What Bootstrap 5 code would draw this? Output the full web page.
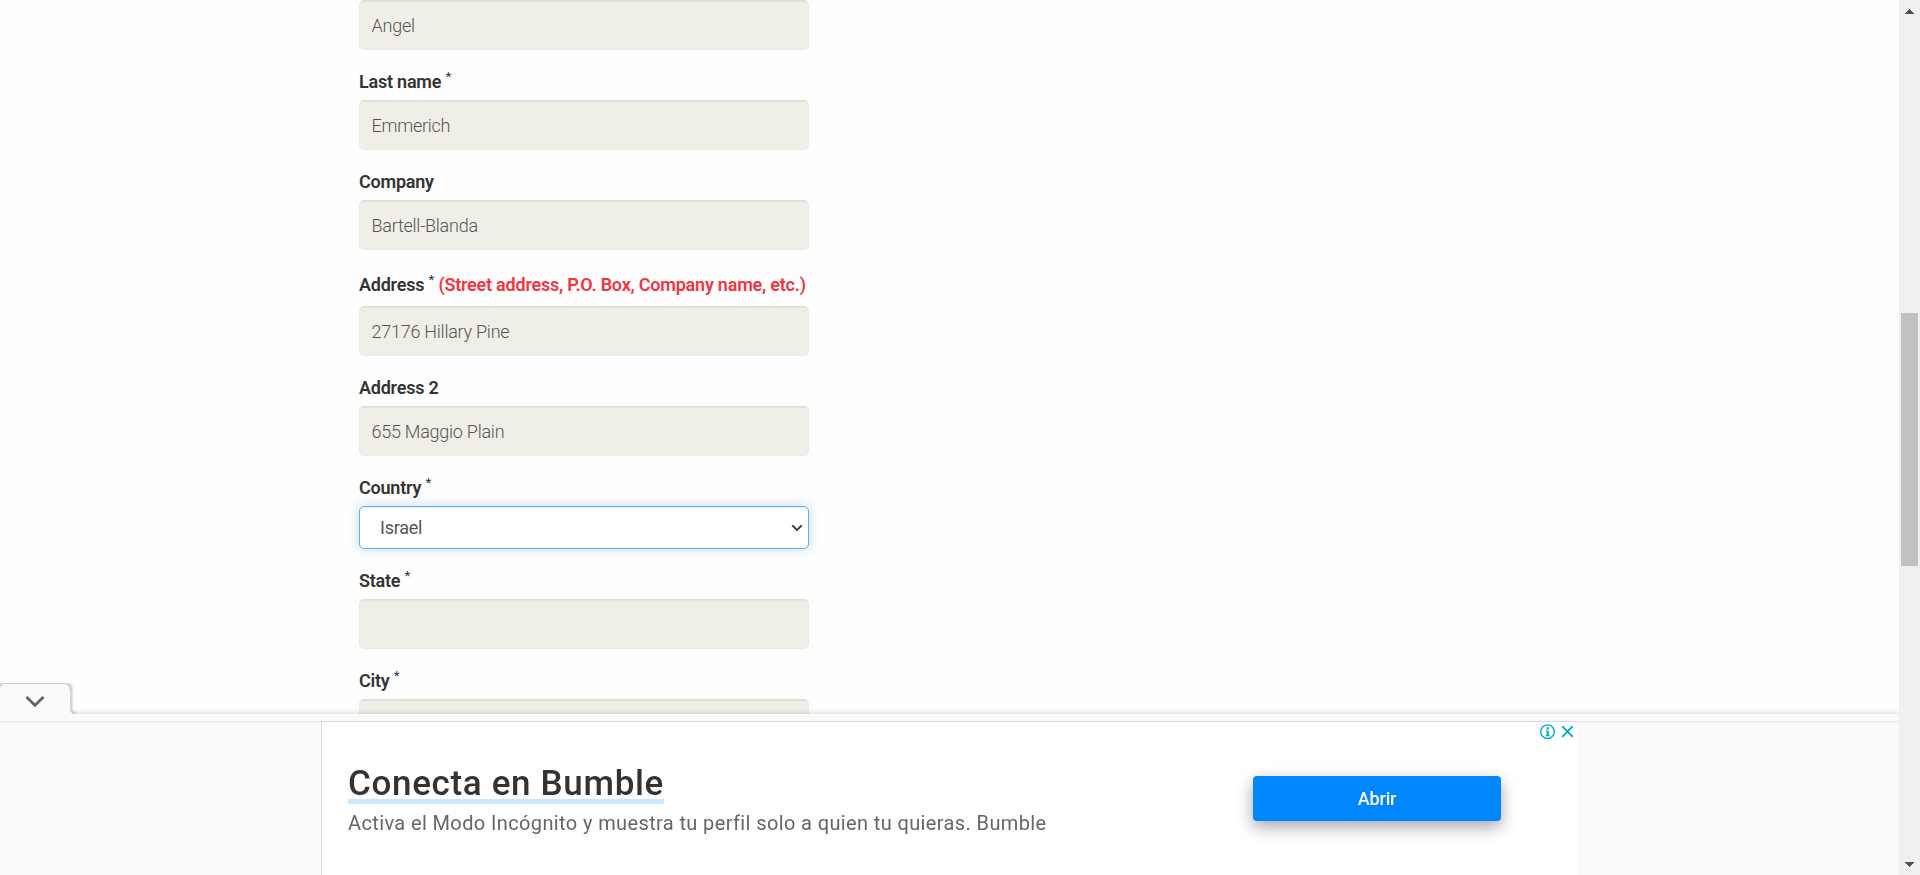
<!DOCTYPE html>
<html lang="en">
<head>
<meta charset="utf-8">
<meta name="viewport" content="width=device-width, initial-scale=1">
<title>Billing details</title>
<link href="https://cdn.jsdelivr.net/npm/bootstrap@5.3.0/dist/css/bootstrap.min.css" rel="stylesheet">
<style>
  body { font-family: Roboto, "Liberation Sans", sans-serif; background: #fefefe; color: #333; }
  .page-area { min-width: 0; }
  .billing-form { width: 450px; margin-left: 359px; }
  .field-label { display: block; height: 50px; padding-top: 19px; font-size: 18px; line-height: 26px; font-weight: 600; letter-spacing: -.22px; white-space: nowrap; color: #333; }
  .field-label.tall { height: 56px; padding-top: 22px; }
  .field-label sup { font-size: 13.5px; font-weight: 400; line-height: 0; top: -.5em; }
  .field-label .hint { color: #f5333f; }
  .billing-form .form-control { height: 50px; padding: 0 12px 0 11.5px; border: 1px solid #ebebe3; border-top-color: #dfdfd5; border-radius: 5px; background: #f0efe7; box-shadow: inset 0 1px 1px rgba(0,0,0,.05); font-size: 18px; font-weight: 300; letter-spacing: -.25px; color: #555; }
  .billing-form .form-select { height: 43px; padding: 0 12px 0 20px; border: 1px solid #66afe9; border-radius: 5px; background-color: #fff; background-size: 12px 8px; background-position: right 5px center; background-image: url("data:image/svg+xml,%3Csvg xmlns='http://www.w3.org/2000/svg' viewBox='0 0 12 8'%3E%3Cpath d='M1.2 1.3 6 6 10.800 1.300' fill='none' stroke='%23484848' stroke-width='2'/%3E%3C/svg%3E"); box-shadow: inset 0 1px 1px rgba(0,0,0,.075), 0 0 12px rgba(102,175,233,.45); font-size: 18px; font-weight: 400; letter-spacing: -.25px; color: #555; }
  .scroll-rail { width: 21px; background: #f0f0f0; padding: 9px 0 8px; }
  .scroll-thumb { width: 17px; height: 253px; background: #c1c1c1; margin-top: 299px; }
  .ad-dock { right: 21px; height: 161px; background: #fafafa; box-shadow: 0 -1px 5px rgba(0,0,0,.15); clip-path: inset(-40px 0 0 0); }
  .ad-handle { left: 0; top: -31px; }
  .ad-strip { height: 8px; background: #fafafa; border-bottom: 1px solid #e8e8e8; box-shadow: 0 1px 2px rgba(0,0,0,.05); }
  .ad-unit { width: 1256px; height: 153px; margin-left: 321px; background: #fff; border-left: 1px solid #e0e0e0; box-shadow: 0 -1px 0 #d8d8d8; padding-left: 26px; }
  .ad-copy { padding-top: 40px; width: 905px; white-space: nowrap; }
  .ad-title { display: inline-block; font-size: 35px; line-height: 43px; height: 42px; font-weight: 500; letter-spacing: .66px; color: #333; border-bottom: 5px solid #cce7ff; margin: 0; }
  .ad-text { font-size: 20px; line-height: 26px; letter-spacing: .38px; color: #666; margin: 6px 0 0; }
  .ad-cta { width: 248px; height: 45px; margin-top: 54px; padding: 0; border: 0; border-radius: 4px; background: #0087ff; font-size: 18px; font-weight: 500; letter-spacing: -.2px; color: #fff; box-shadow: 0 6px 16px rgba(20,20,50,.38); }
  .ad-badges { padding: 2px 1px 0 0; height: 18px; }
</style>
</head>
<body class="vh-100 overflow-hidden">
<div class="d-flex vh-100">
  <main class="page-area flex-grow-1 overflow-hidden">
    <form class="billing-form">
      <input class="form-control" type="text" value="Angel" aria-label="First name">
      <label class="field-label" for="last">Last name <sup>*</sup></label>
      <input class="form-control" type="text" id="last" value="Emmerich">
      <label class="field-label" for="company">Company</label>
      <input class="form-control" type="text" id="company" value="Bartell-Blanda">
      <label class="field-label tall" for="addr">Address <sup>*</sup> <span class="hint">(Street address, P.O. Box, Company name, etc.)</span></label>
      <input class="form-control" type="text" id="addr" value="27176 Hillary Pine">
      <label class="field-label" for="addr2">Address 2</label>
      <input class="form-control" type="text" id="addr2" value="655 Maggio Plain">
      <label class="field-label" for="country">Country <sup>*</sup></label>
      <select class="form-select" id="country"><option>Israel</option></select>
      <label class="field-label" for="state">State <sup>*</sup></label>
      <input class="form-control" type="text" id="state">
      <label class="field-label" for="city">City <sup>*</sup></label>
      <input class="form-control" type="text" id="city">
    </form>
  </main>
  <aside class="scroll-rail d-flex flex-column align-items-center flex-shrink-0">
    <svg class="flex-shrink-0" width="9" height="5" shape-rendering="crispEdges"><path d="M4.500 0 9 5H0z" fill="#505050"/></svg>
    <div class="scroll-thumb flex-shrink-0"></div>
    <svg class="flex-shrink-0 mt-auto" width="9" height="5" shape-rendering="crispEdges"><path d="M0 0h9L4.500 5z" fill="#505050"/></svg>
  </aside>
</div>

<aside class="ad-dock position-fixed bottom-0 start-0">
  <svg class="ad-handle position-absolute" width="80" height="39" viewBox="0 0 80 39">
    <defs><filter id="soft" x="-20%" y="-20%" width="140%" height="140%"><feGaussianBlur stdDeviation="1.300"/></filter></defs>
    <path d="M0 4Q1 0 5 0H65Q71 0 71 7V26Q71 31 76 31" fill="none" stroke="#000" stroke-opacity=".28" stroke-width="2" filter="url(#soft)"/>
    <path d="M0 5Q1 .5 5 .5H63Q70 .5 70 7V26Q70 31 76 31H80V38H0z" fill="#fafafa"/>
    <path d="M0 4Q1 .5 5 .5H63Q70 .5 70 7" fill="none" stroke="#ccc"/>
    <path d="M26.500 14 35 22.300 43.500 14" fill="none" stroke="#5f6368" stroke-width="2.700"/>
  </svg>
  <div class="ad-strip"></div>
  <div class="ad-unit d-flex position-relative">
    <div class="ad-copy flex-shrink-0">
      <h2 class="ad-title">Conecta en Bumble</h2>
      <p class="ad-text">Activa el Modo Incógnito y muestra tu perfil solo a quien tu quieras. Bumble</p>
    </div>
    <button class="btn ad-cta flex-shrink-0" type="button">Abrir</button>
    <div class="ad-badges d-flex ms-auto position-absolute top-0 end-0">
      <svg width="36" height="16" viewBox="0 0 36 16"><circle cx="7.500" cy="7.700" r="6.800" fill="none" stroke="#00aecd" stroke-width="1.400"/><path d="M6.600 3.300h2.200v2.200H6.600zM6 6.500h2.800v4.500h.9v1.200H5.700V11h.9V7.700H6z" fill="#00aecd"/><path d="m22.200 2.200 10.600 10.600m0-10.600L22.200 12.800" stroke="#00aecd" stroke-width="1.900" fill="none"/></svg>
    </div>
  </div>
</aside>
<script src="https://cdn.jsdelivr.net/npm/bootstrap@5.3.0/dist/js/bootstrap.bundle.min.js"></script>
</body>
</html>
